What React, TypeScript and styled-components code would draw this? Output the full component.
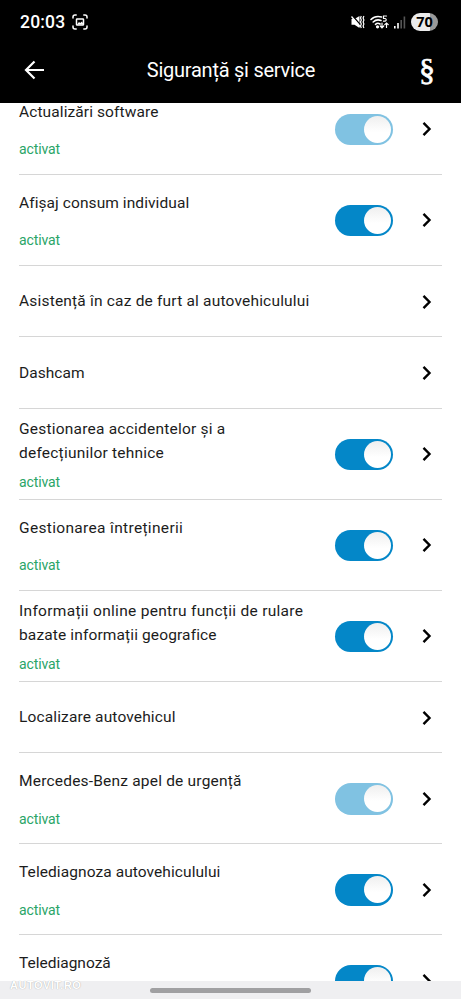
import React from "react";
import styled, { createGlobalStyle } from "styled-components";

const GlobalStyle = createGlobalStyle`
  * { box-sizing: border-box; }
  body { margin: 0; background: #fff; overflow: hidden; }
`;

const Screen = styled.div`
  width: 461px;
  height: 999px;
  display: flex;
  flex-direction: column;
  overflow: hidden;
  background: #fff;
  font-family: Roboto, "Liberation Sans", sans-serif;
`;

const Header = styled.header`
  flex: none;
  height: 103px;
  background: #000;
  color: #fff;
`;

const StatusBar = styled.div`
  height: 44px;
  padding: 0 23px 0 20px;
  display: flex;
  align-items: center;
  justify-content: space-between;
`;

const StatusGroup = styled.div<{ $gap: number }>`
  display: flex;
  align-items: center;
  gap: ${(p) => p.$gap}px;
`;

const Clock = styled.span`
  font-size: 17.5px;
  font-weight: 500;
  line-height: 20px;
  letter-spacing: 0.2px;
`;

const Battery = styled.span`
  width: 27px;
  height: 18px;
  border-radius: 9px;
  background: linear-gradient(90deg, #ececec 70%, #999 70%);
  color: #000;
  font-family: "Open Sans", Roboto, sans-serif;
  font-size: 14.5px;
  font-weight: 700;
  line-height: 18px;
  text-align: center;
`;

const TitleBar = styled.div`
  height: 52px;
  padding: 0 25px 0 24px;
  display: grid;
  grid-template-columns: 38px 1fr 36px;
  align-items: center;
`;

const Title = styled.h1`
  margin: 0;
  font-size: 20px;
  font-weight: 400;
  line-height: 26px;
  letter-spacing: -0.25px;
  text-align: center;
  white-space: nowrap;
`;

const Section = styled.span`
  font-family: "Liberation Serif", serif;
  font-size: 32px;
  line-height: 36px;
  text-align: right;
  padding-right: 1px;
  -webkit-text-stroke: 0.7px #fff;
`;

const List = styled.main`
  flex: 1;
  min-height: 0;
  overflow: hidden;
  padding: 0 19px;
`;

const Rows = styled.div`
  margin-top: -19.5px;
`;

const Row = styled.div<{ $short: boolean }>`
  height: ${(p) => (p.$short ? 71.5 : 91)}px;
  padding-top: 1.5px;
  border-bottom: 1px solid #d6d6d6;
  display: flex;
  align-items: center;
`;

const Copy = styled.div<{ $gap: number; $tall: boolean }>`
  flex: 1;
  min-height: ${(p) => (p.$tall ? 59.5 : 0)}px;
  display: flex;
  flex-direction: column;
  gap: ${(p) => p.$gap}px;
`;

const Line = styled.span<{ $spacing: number }>`
  display: block;
  color: #1c1c1c;
  font-size: 15.5px;
  line-height: 24.5px;
  letter-spacing: ${(p) => p.$spacing}px;
  white-space: nowrap;
`;

const Status = styled.span`
  margin: -1px 0 1px;
  color: #2aa567;
  font-size: 14px;
  line-height: 18px;
  letter-spacing: -0.1px;
`;

const Toggle = styled.span<{ $dim?: boolean }>`
  flex: none;
  width: 58px;
  height: 31.5px;
  padding: 2px;
  border-radius: 16px;
  background: ${(p) => (p.$dim ? "#80c2e2" : "#0487c8")};
  display: flex;
  align-items: center;
  justify-content: flex-end;
`;

const Knob = styled.span`
  width: 27px;
  height: 27px;
  border-radius: 50%;
  background: linear-gradient(#efefef, #fff 60%);
`;

const Chevron = styled.svg`
  flex: none;
  display: block;
  width: 12px;
  height: 16px;
  margin: 0 10px 0 27px;
`;

const NavBar = styled.footer`
  flex: none;
  height: 18px;
  padding: 0 150px 0 10px;
  display: flex;
  align-items: center;
  justify-content: space-between;
  background: #efeff1;
`;

const Watermark = styled.span`
  margin-top: -10px;
  color: #fff;
  font-family: "Liberation Sans", sans-serif;
  font-size: 11px;
  font-weight: 700;
  line-height: 14px;
  letter-spacing: 0.5px;
  text-shadow: 0 0 1px #999;
`;

const Handle = styled.span`
  width: 161px;
  height: 5px;
  border-radius: 3px;
  background: #a0a0a2;
`;

type TextLine = { text: string; spacing: number };
type Item = { lines: TextLine[]; state?: "on" | "locked"; status?: string };

const items: Item[] = [
  { lines: [{ text: "Actualizări software", spacing: 0.1 }], state: "locked", status: "activat" },
  { lines: [{ text: "Afișaj consum individual", spacing: 0.08 }], state: "on", status: "activat" },
  { lines: [{ text: "Asistență în caz de furt al autovehiculului", spacing: 0.19 }] },
  { lines: [{ text: "Dashcam", spacing: 0.05 }] },
  {
    lines: [
      { text: "Gestionarea accidentelor și a", spacing: 0.22 },
      { text: "defecțiunilor tehnice", spacing: 0.22 },
    ],
    state: "on",
    status: "activat",
  },
  { lines: [{ text: "Gestionarea întreținerii", spacing: 0.33 }], state: "on", status: "activat" },
  {
    lines: [
      { text: "Informații online pentru funcții de rulare", spacing: 0.3 },
      { text: "bazate informații geografice", spacing: 0.13 },
    ],
    state: "on",
    status: "activat",
  },
  { lines: [{ text: "Localizare autovehicul", spacing: 0.14 }] },
  { lines: [{ text: "Mercedes-Benz apel de urgență", spacing: 0.2 }], state: "locked", status: "activat" },
  { lines: [{ text: "Telediagnoza autovehiculului", spacing: 0.08 }], state: "on", status: "activat" },
  { lines: [{ text: "Telediagnoză", spacing: 0 }], state: "on" },
];

function CaptureIcon() {
  return (
    <svg width="16" height="16" viewBox="0 0 16 16" fill="none" stroke="#fff" strokeWidth="1.5" strokeLinecap="round">
      <path d="M1 4V3a2 2 0 0 1 2-2h1.200M11.800 1H13a2 2 0 0 1 2 2v1M15 12v1a2 2 0 0 1-2 2h-1.200M4.200 15H3a2 2 0 0 1-2-2v-1" />
      <rect x="4.500" y="5" width="7" height="6" rx="0.600" />
      <path d="m5 10.500 2-2.500 1.200 1L10 7.500l1.500 3z" fill="#fff" stroke="none" />
    </svg>
  );
}

function MuteIcon() {
  return (
    <svg width="14" height="14" viewBox="0 0 14 14" fill="none">
      <path d="M0.500 4h3L8.500 1v12L3.500 9.800h-3z" fill="#fff" />
      <path d="M1.200 0.500 10.500 11" stroke="#000" strokeWidth="1.300" />
      <path d="M0.500 1.500 9 11.500" stroke="#fff" strokeWidth="1.300" />
      <path d="m10.300 1-.8 2 .8 2-.8 2 .8 2-.8 2 .8 2M12.900 1l-.8 2 .8 2-.8 2 .8 2-.8 2 .8 2" stroke="#fff" strokeWidth="1.200" />
    </svg>
  );
}

function WifiIcon() {
  return (
    <svg width="19" height="14" viewBox="0 0 19 14" fill="none" stroke="#fff" strokeWidth="1.600" strokeLinecap="round">
      <path d="M1 4.500C4 1.500 8 1 11.500 2M3.200 7C5.500 4.800 8.500 4.500 11 5.500M5.500 9.300c1.500-1.300 3-1.300 4.500-.3" />
      <circle cx="7.500" cy="11.800" r="0.800" fill="#fff" />
      <path d="M16.500 1h-3v2.500h1.700a1.400 1.400 0 0 1 0 2.700h-1.700" strokeWidth="1.200" />
      <path d="M12 8v4.500m-1.700-1.500 1.700 1.800 1.700-1.800M16.500 12.500V8m-1.700 1.700L16.500 8l1.700 1.700" strokeWidth="1.200" />
    </svg>
  );
}

function SignalIcon() {
  return (
    <svg width="12" height="13" viewBox="0 0 12 13">
      <rect x="0" y="10" width="1.600" height="2.500" fill="#fff" />
      <rect x="3.200" y="7" width="1.600" height="5.500" fill="#fff" />
      <rect x="6.400" y="4" width="1.600" height="8.500" fill="#555" />
      <rect x="9.600" y="0.500" width="1.600" height="12" fill="#555" />
    </svg>
  );
}

function ItemRow({ item }: { item: Item }) {
  return (
    <Row $short={!item.state}>
      <Copy $gap={item.lines.length > 1 ? 8 : 17} $tall={!!item.state}>
        <div>
          {item.lines.map((line) => (
            <Line key={line.text} $spacing={line.spacing}>{line.text}</Line>
          ))}
        </div>
        {item.status && <Status>{item.status}</Status>}
      </Copy>
      {item.state && (
        <Toggle $dim={item.state === "locked"}>
          <Knob />
        </Toggle>
      )}
      <Chevron viewBox="0 0 12 16" fill="none" stroke="#000" strokeWidth="2.400">
        <path d="m3.500 1.900 6 6.100-6 6.100" />
      </Chevron>
    </Row>
  );
}

export default function App() {
  return (
    <Screen>
      <GlobalStyle />
      <Header>
        <StatusBar>
          <StatusGroup $gap={7}>
            <Clock>20:03</Clock>
            <CaptureIcon />
          </StatusGroup>
          <StatusGroup $gap={5}>
            <MuteIcon />
            <WifiIcon />
            <SignalIcon />
            <Battery>70</Battery>
          </StatusGroup>
        </StatusBar>
        <TitleBar>
          <svg width="21" height="20" viewBox="0 0 21 20" fill="none" stroke="#fff" strokeWidth="2.200">
            <path d="M20 10H2.500M10.500 1.500 2 10l8.500 8.500" />
          </svg>
          <Title>Siguranță și service</Title>
          <Section>§</Section>
        </TitleBar>
      </Header>
      <List>
        <Rows>
          {items.map((item) => (
            <ItemRow key={item.lines[0].text} item={item} />
          ))}
        </Rows>
      </List>
      <NavBar>
        <Watermark>AUTOVIT.RO</Watermark>
        <Handle />
      </NavBar>
    </Screen>
  );
}
